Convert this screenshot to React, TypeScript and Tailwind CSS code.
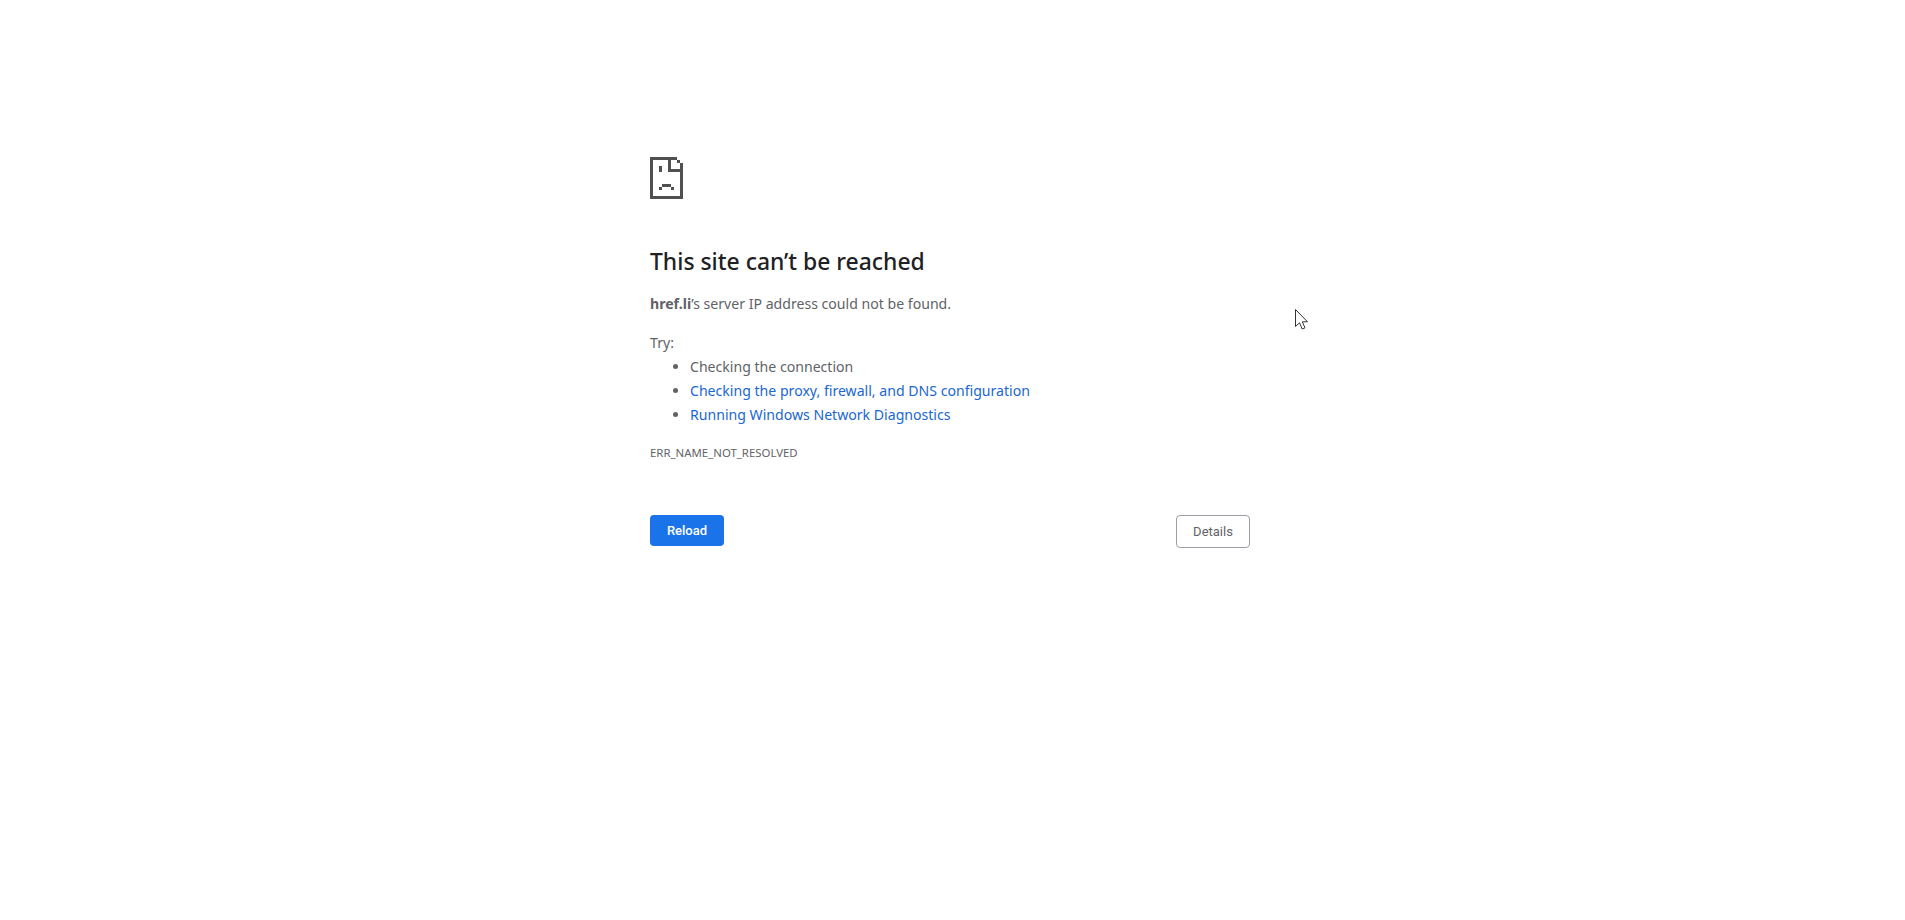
export default function App() {
	return (
		<main className="relative min-h-[920px] w-full bg-white font-['Noto_Sans','Open_Sans',sans-serif] text-[14.1px] text-[#5f6368]">
			<div className="ml-[650px] w-[600px] pt-[157px]">
				<svg width="33" height="42" viewBox="0 0 11 14" shapeRendering="crispEdges" fill="#505050">
					<path d="M0 0h9v1H0zM0 1h1v13H0zM1 13h10v1H1zM10 2h1v11h-1zM9 1h1v1H9zM6 1h1v3H6zM6 4h5v1H6zM3 3h1v2H3zM4 9h3v1H4zM3 10h1v1H3zM7 10h1v1H7z" />
				</svg>

				<h1 className="mt-[47px] text-[22.9px] leading-[32px] font-medium text-[#202124]">This site can’t be reached</h1>
				<p className="mt-[14px] leading-[24px]"><strong className="font-bold">href.li</strong>’s server IP address could not be found.</p>

				<p className="mt-[15px] leading-[24px]">Try:</p>
				<ul className="list-disc pl-[40px] leading-[24px]">
					<li>Checking the connection</li>
					<li><a className="text-[#1967d2]">Checking the proxy, firewall, and DNS configuration</a></li>
					<li><a className="text-[#1967d2]">Running Windows Network Diagnostics</a></li>
				</ul>

				<p className="mt-[14px] text-[11.4px] leading-[24px] uppercase">ERR_NAME_NOT_RESOLVED</p>

				<div className="mt-[50px] flex items-start justify-between font-['Roboto',sans-serif] text-[13px]">
					<button className="h-[31px] w-[74px] rounded-[4px] bg-[#1a73e8] font-medium text-white">Reload</button>
					<button className="h-[33px] w-[74px] rounded-[4px] border border-[#9aa0a6] text-[#5f6368]">Details</button>
				</div>
			</div>

			{/* mouse pointer left in the capture */}
			<svg className="absolute left-[1295px] top-[309px]" width="14" height="22" viewBox="0 0 14 22" fill="#fff" stroke="#333" strokeWidth="1">
				<path d="M0.5 0.5V17.5L4.5 13.8L7.2 20L10 18.8L7.3 12.8H12.5Z" />
			</svg>
		</main>
	);
}
